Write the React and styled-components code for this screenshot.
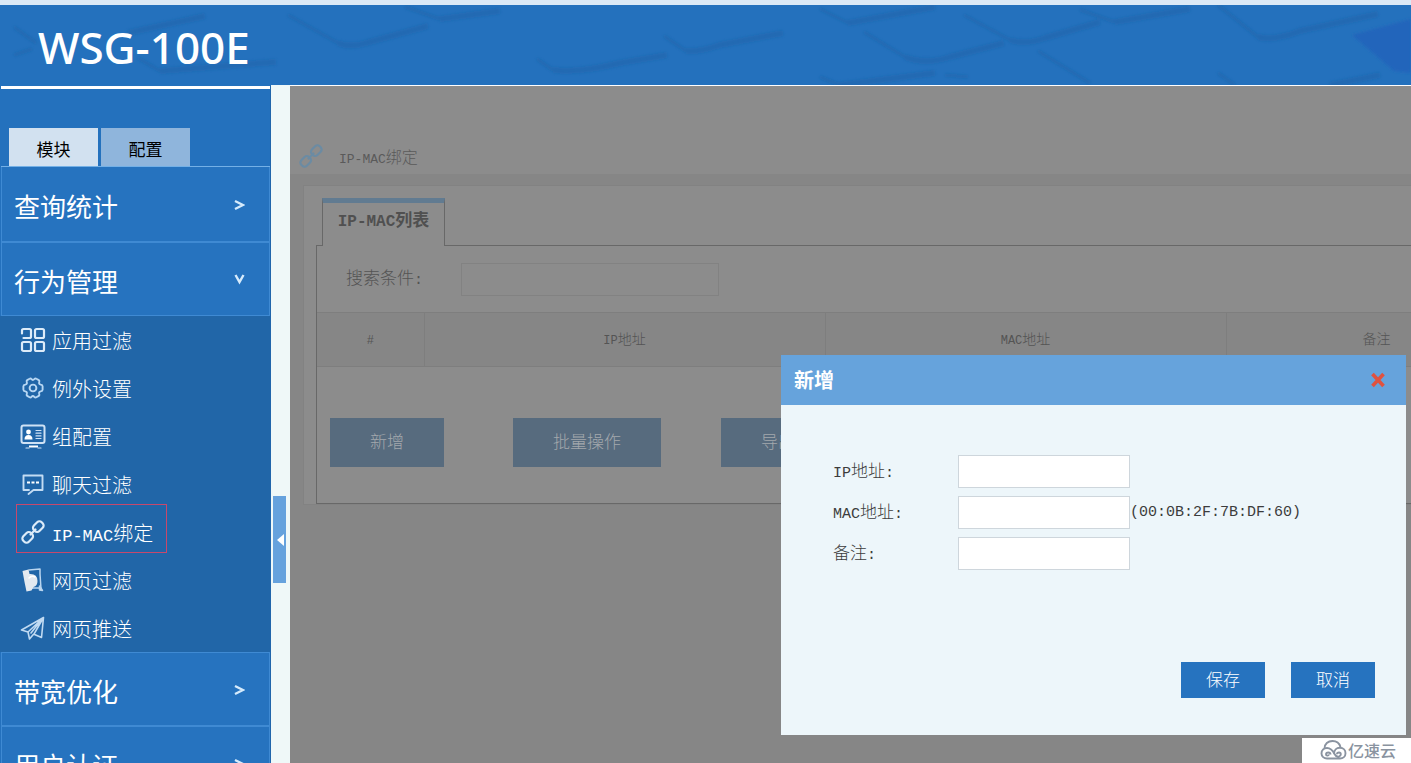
import React from "react";
import styled, { createGlobalStyle, css } from "styled-components";

const CJK = '"Noto Sans CJK SC", sans-serif';

const GlobalStyle = createGlobalStyle`
  *, *::before, *::after { box-sizing: border-box; }
  body { margin: 0; overflow: hidden; font-family: ${CJK}; font-weight: 300; }
  button, input { font-family: inherit; font-weight: inherit; }
  button { border: 0; padding: 0; cursor: pointer; }
  h1, h2, ul { margin: 0; padding: 0; }
`;

/* ---------- text ---------- */

const Latin = styled.span`
  font-family: "Liberation Mono", monospace;
  font-size: ${(p) => p.$size}px;
`;

function Mixed({ text, size }) {
  return text
    .split(/([\x21-\x7e]+)/)
    .filter(Boolean)
    .map((part, i) =>
      /[\x21-\x7e]/.test(part) ? (
        <Latin key={i} $size={size}>
          {part}
        </Latin>
      ) : (
        <React.Fragment key={i}>{part}</React.Fragment>
      )
    );
}

/* ---------- page frame ---------- */

const Page = styled.div`
  display: flex;
  flex-direction: column;
  height: 100vh;
  overflow: hidden;
  background: #eff8f8;
`;

const Header = styled.header`
  position: relative;
  flex: none;
  height: 85px;
  border-top: 5px solid #dbe9f6;
  background: #2471bd;
  overflow: hidden;
`;

const HeaderArt = styled.svg`
  position: absolute;
  inset: 0;
  width: 100%;
  height: 80px;
`;

const Brand = styled.h1`
  position: relative;
  padding-left: 38px;
  color: #fff;
  font-family: "Noto Sans", sans-serif;
  font-size: 44px;
  font-weight: 500;
  line-height: 84px;
`;

const Columns = styled.div`
  display: flex;
  flex: 1;
  min-height: 0;
`;

/* ---------- sidebar ---------- */

const Sidebar = styled.nav`
  flex: none;
  width: 271px;
  border-top: 1px solid #2471bd;
  border-right: 1px solid #2166ab;
  background: #2471bd;
  overflow: hidden;
`;

const SideTabs = styled.div`
  display: flex;
  gap: 3px;
  height: 81px;
  margin-left: 1px;
  padding: 39px 8px 0;
  border-top: 3px solid #fff;
  border-bottom: 1px solid #74b0e6;
`;

const SideTab = styled.button`
  width: 89px;
  height: 38px;
  padding-top: 2px;
  background: ${(p) => (p.$active ? "#d2e1f0" : "#8fb5dc")};
  color: #000;
  font-size: 17px;
  font-weight: 400;
`;

const GroupButton = styled.button`
  display: flex;
  align-items: center;
  justify-content: space-between;
  width: 269px;
  height: ${(p) => (p.$first ? 75 : 74)}px;
  margin-left: 1px;
  padding: 3px 24px 0 12px;
  border: 1px solid #3f8ad3;
  border-top-width: ${(p) => (p.$first ? 0 : 1)}px;
  background: #2673bf;
  color: #fff;
  font-size: 26px;
  font-weight: 400;
`;

const Submenu = styled.ul`
  list-style: none;
  background: #2166a8;
`;

const SubItem = styled.li`
  position: relative;
  height: 48px;
  ${(p) =>
    p.$marked &&
    css`
      &::after {
        content: "";
        position: absolute;
        top: -4px;
        left: 16px;
        width: 151px;
        height: 49px;
        border: 1px solid #c8486c;
        pointer-events: none;
      }
    `}
`;

const SubLink = styled.a`
  display: flex;
  align-items: center;
  gap: 6px;
  height: 48px;
  padding-left: 20px;
  color: #fff;
  font-size: 20px;
  text-decoration: none;
  white-space: nowrap;
`;

const Gutter = styled.div`
  flex: none;
  width: 19px;
  padding: 411px 0 0 2px;
  background: #eff8f8;
`;

const Collapse = styled.button`
  display: flex;
  align-items: center;
  justify-content: flex-end;
  width: 13px;
  height: 87px;
  padding-right: 2px;
  background: #66a2dd;
`;

/* ---------- content ---------- */

const Content = styled.main`
  flex: 1;
  min-width: 0;
  border-top: 1px solid #fff;
  background: #868686;
  overflow: hidden;
`;

const TitleBar = styled.div`
  display: flex;
  align-items: center;
  gap: 15px;
  height: 88px;
  padding: 52px 0 0 8px;
  background: #8c8c8c;
  color: #5a5a5a;
  font-size: 16px;
`;

const Panel = styled.section`
  min-width: 1236px;
  margin: 11px 0 0 13px;
  padding: 12px 12px 0;
  border: 1px solid #828282;
  background: #8c8c8c;
`;

const PanelTab = styled.button`
  position: relative;
  display: block;
  width: 123px;
  height: 48px;
  margin: 0 0 -1px 6px;
  padding-bottom: 12px;
  border: 1px solid #686868;
  border-top: 5px solid #617b91;
  border-bottom: 0;
  background: #8c8c8c;
  color: #505050;
  font-size: 17px;
  font-weight: 700;
`;

const PanelBody = styled.div`
  border: 1px solid #686868;
`;

const SearchRow = styled.div`
  display: flex;
  align-items: center;
  height: 66px;
  padding-left: 29px;
  color: #545454;
  font-size: 17px;
`;

const SearchLabel = styled.label`
  width: 115px;
  padding-bottom: 5px;
`;

const SearchInput = styled.input`
  width: 258px;
  height: 33px;
  border: 1px solid #828282;
  background: #8c8c8c;
`;

const Table = styled.table`
  width: 100%;
  min-width: 1210px;
  table-layout: fixed;
  border-collapse: collapse;
  color: #545454;
  font-size: 14px;
`;

const Th = styled.th`
  width: ${(p) => p.$width}px;
  height: 54px;
  padding: 0 0 3px;
  border: 1px solid #7e7e7e;
  border-left-width: 0;
  background: #868686;
  font-weight: 300;
`;

const Actions = styled.div`
  display: flex;
  gap: 60px;
  padding: 51px 13px 36px;
`;

const ActionButton = styled.button`
  height: 49px;
  padding: 0 40px 4px;
  background: #576b7e;
  color: #a3a8ad;
  font-size: 17px;
  &:first-child { margin-right: 9px; }
`;

/* ---------- dialog ---------- */

const Dialog = styled.section`
  position: fixed;
  right: 5px;
  bottom: 28px;
  width: 625px;
  height: 380px;
  background: #edf6fa;
`;

const DialogHeader = styled.header`
  display: flex;
  align-items: center;
  justify-content: space-between;
  height: 50px;
  padding: 0 20px 0 13px;
  background: #66a3dc;
`;

const DialogTitle = styled.h2`
  color: #fff;
  font-size: 20px;
  font-weight: 700;
  line-height: 50px;
`;

const CloseButton = styled.button`
  display: flex;
  background: none;
`;

const Form = styled.form`
  display: flex;
  flex-direction: column;
  gap: 8px;
  padding: 50px 31px 0 52px;
  color: #3c3c3c;
  font-size: 17px;
`;

const Field = styled.div`
  display: flex;
  align-items: center;
  height: 33px;
`;

const FieldLabel = styled.label`
  width: 125px;
  padding-bottom: 4px;
`;

const FieldInput = styled.input`
  width: 172px;
  height: 33px;
  border: 1px solid #ced6dc;
  background: #fff;
`;

const DialogActions = styled.div`
  display: flex;
  justify-content: flex-end;
  gap: 26px;
  padding-top: 84px;
`;

const DialogButton = styled.button`
  width: 84px;
  height: 36px;
  padding-bottom: 4px;
  background: #2673bf;
  color: #fff;
  font-size: 17px;
`;

const Watermark = styled.div`
  position: fixed;
  right: 0;
  bottom: 0;
  display: flex;
  align-items: center;
  gap: 1px;
  width: 109px;
  height: 25px;
  padding: 0 0 1px 18px;
  background: #fff;
  color: #8a93a0;
  font-size: 16px;
  font-weight: 500;
  white-space: nowrap;
`;

/* ---------- icons ---------- */

const Icon = ({ children, color = "#dcebf9", width = 2 }) => (
  <svg
    width="26"
    height="26"
    viewBox="0 0 26 26"
    fill="none"
    stroke={color}
    strokeWidth={width}
    strokeLinecap="round"
    strokeLinejoin="round"
    aria-hidden="true"
  >
    {children}
  </svg>
);

const GridIcon = () => (
  <Icon width={2.2}>
    <path d="M2 6.500V3.500A1.500 1.500 0 0 1 3.500 2h6A1.500 1.500 0 0 1 11 3.500v6A1.500 1.500 0 0 1 9.500 11H3.500" />
    <rect x="15" y="2" width="9" height="9" rx="1.5" />
    <rect x="2" y="15" width="9" height="9" rx="1.5" />
    <rect x="15" y="15" width="9" height="9" rx="1.5" />
  </Icon>
);

const GearIcon = () => (
  <Icon width={1.9} color="#b8d7f3">
    <path d="M9.600 3.700Q10.700 3 11.500 4.200Q12.800 5.700 14.300 4.200Q15.300 3 16.400 3.700L18.800 5.100Q19.800 5.900 19.200 7.200Q18.600 9.200 20.700 9.600Q22.500 9.900 22.600 11.200V14.800Q22.500 16.100 20.700 16.400Q18.600 16.800 19.200 18.800Q19.800 20.100 18.800 20.900L16.400 22.300Q15.300 23 14.300 21.800Q12.900 20.300 11.500 21.800Q10.700 23 9.600 22.300L7.200 20.900Q6.200 20.100 6.800 18.800Q7.400 16.800 5.300 16.400Q3.500 16.100 3.400 14.800V11.200Q3.500 9.900 5.300 9.600Q7.400 9.200 6.800 7.200Q6.200 5.900 7.200 5.100Z" />
    <circle cx="13" cy="13" r="3.400" />
  </Icon>
);

const MonitorIcon = () => (
  <Icon color="#cfe2f5">
    <rect x="1.500" y="2.500" width="23" height="17.500" rx="2" />
    <g fill="#fff" stroke="none">
      <circle cx="8.500" cy="9" r="2.400" />
      <path d="M4.500 16.500Q4.500 12 8.500 12Q12.500 12 12.500 16.500Z" />
      <path d="M9 22.500h9v2H9z" />
    </g>
    <path strokeWidth="1.200" d="M16 7.500h5M16 10.200h5M16 12.900h5M16 15.500h5M6 25h3M18 25h3" />
  </Icon>
);

const ChatIcon = () => (
  <Icon width={1.9} color="#c3dcf3">
    <path d="M9 19H3.500V4.500h19V19H13.500L8.500 23" />
    <path strokeWidth="2.200" strokeLinecap="butt" stroke="#fff" d="M7 11.500h3M11.500 11.500h3M16 11.500h3" />
  </Icon>
);

const ChainIcon = ({ color }) => (
  <Icon width={2.2} color={color}>
    <rect x="-5.500" y="-3.900" width="11" height="7.800" rx="3.200" transform="translate(18.300 7.700) rotate(-45)" />
    <rect x="-5.500" y="-3.900" width="11" height="7.800" rx="3.200" transform="translate(7.700 18.300) rotate(-45)" />
    <path d="M10.500 15.500L15.500 10.500" />
  </Icon>
);

const PageIcon = () => (
  <Icon width={1.5} color="#b9d5ef">
    <path d="M9 3L20 2v5l1 15-2-1H10" />
    <path d="M19.500 19l3 4.500-3-.5z" fill="#e8eef4" />
    <path stroke="none" fill="#e3e9f0" d="M2.500 4l6-1.500L9.500 7q8-0.500 8 7 0 5-4 6l-2 3.500-5 1L4.500 15z" />
    <path d="M9 11q2.500-3 6-1" stroke="#fff" />
  </Icon>
);

const PlaneIcon = () => (
  <Icon width={1.6} color="#c0daf2">
    <path d="M23.500 2.500L1.500 15l6.500 2zM23.500 2.500L21.500 22.500l-7.500-3.300zM8 17l1.500 7 3.800-4.500M11 18l9.500-12" />
  </Icon>
);

const Chevron = ({ open }) => (
  <svg width="12" height="14" viewBox="0 0 12 14" fill="none" stroke="#d6ebfc" strokeWidth="2.400" aria-hidden="true">
    <path d={open ? "M2.500 1L6.500 8L10.500 1" : "M2 2L10 6L2 10"} />
  </svg>
);

const CloseIcon = () => (
  <svg width="16" height="16" viewBox="0 0 16 16" stroke="#e0523f" strokeWidth="3.600" aria-hidden="true">
    <path d="M2.500 2L13.500 14M13.500 2L2.500 14" />
  </svg>
);

const CloudLogo = () => (
  <svg width="27" height="22" viewBox="0 0 27 22" fill="none" stroke="#8a93a0" strokeWidth="1.900" aria-hidden="true">
    <path d="M4.500 9.500C4.500 5 8 2 12.500 2C17 2 19.500 4.500 20.500 8" />
    <path d="M14 15C14 11 16.500 8.800 19.800 8.800C23.500 8.800 25.500 11.500 25.500 14.200C25.500 17.500 23 19.500 20 19.500H7C4 19.500 1.500 17.500 1.500 14.500C1.500 11 4 9 7 9C11 9 13 12 14.500 15C15.500 17 17 18 19 17.500C21.500 16.800 21.300 13.500 19 13.500C17.800 13.500 17 14.300 17 15.300" />
    <path d="M10.500 15.500C10.500 13 6 12.800 6 15.200C6 17 8.500 17 9 15.500" />
  </svg>
);

const KeyboardArt = () => (
  <HeaderArt viewBox="0 0 1411 80" preserveAspectRatio="xMidYMid slice" aria-hidden="true">
    <defs>
      <filter id="soft" x="-5%" y="-30%" width="110%" height="160%">
        <feGaussianBlur stdDeviation="1.500" />
      </filter>
    </defs>
    <g fill="none" stroke="#1e5c9d" strokeLinejoin="round" filter="url(#soft)">
      <g strokeWidth="3" opacity="0.4">
        <path d="M14 22L36 38M14 50L32 44M138 53L160 66M288 10L338 38M405 2L440 14" />
        <path d="M537 54L553 65M664 31L686 46M820 4L848 18M864 27L905 52M820 72L840 80" />
        <path d="M964 10L1010 35M1080 5L1115 17M1038 46L1090 78M1218 0L1258 32M1218 68L1235 80M945 70L968 72" />
      </g>
      <g strokeWidth="6" opacity="0.32">
        <path d="M128 28L205 11M160 66L276 57M338 38Q350 43 366 38L428 21M440 14L500 6" />
        <path d="M553 65Q580 68 620 58L667 50M686 46Q700 47 720 40L783 28M848 18L935 2" />
        <path d="M905 52Q925 60 950 52L1004 38M840 80L935 68M1010 35Q1025 40 1045 33L1100 17" />
        <path d="M1115 17L1190 4M1258 32Q1275 36 1300 26L1378 9M1330 80L1380 70" />
      </g>
    </g>
    <path d="M1352 30L1411 14V68L1394 66Z" fill="#2065bb" filter="url(#soft)" />
  </HeaderArt>
);

/* ---------- data ---------- */

const submenu = [
  { label: "应用过滤", icon: GridIcon },
  { label: "例外设置", icon: GearIcon },
  { label: "组配置", icon: MonitorIcon },
  { label: "聊天过滤", icon: ChatIcon },
  { label: "IP-MAC绑定", icon: ChainIcon, marked: true },
  { label: "网页过滤", icon: PageIcon },
  { label: "网页推送", icon: PlaneIcon },
];

const groups = [
  { label: "查询统计" },
  { label: "行为管理", items: submenu },
  { label: "带宽优化" },
  { label: "用户认证" },
];

const columns = [
  { label: "#", width: 107 },
  { label: "IP地址", width: 401 },
  { label: "MAC地址", width: 401 },
  { label: "备注", width: 301 },
];

const fields = [
  { id: "ip", label: "IP地址:" },
  { id: "mac", label: "MAC地址:", hint: "(00:0B:2F:7B:DF:60)" },
  { id: "note", label: "备注:" },
];

export default function App() {
  return (
    <Page>
      <GlobalStyle />
      <Header>
        <KeyboardArt />
        <Brand>WSG-100E</Brand>
      </Header>
      <Columns>
        <Sidebar>
          <SideTabs>
            <SideTab $active>模块</SideTab>
            <SideTab>配置</SideTab>
          </SideTabs>
          {groups.map((group, i) => (
            <React.Fragment key={group.label}>
              <GroupButton $first={i === 0} aria-expanded={Boolean(group.items)}>
                {group.label}
                <Chevron open={Boolean(group.items)} />
              </GroupButton>
              {group.items && (
                <Submenu>
                  {group.items.map(({ label, icon: ItemIcon, marked }) => (
                    <SubItem key={label} $marked={marked}>
                      <SubLink href="#">
                        <ItemIcon />
                        <span>
                          <Mixed text={label} size={17} />
                        </span>
                      </SubLink>
                    </SubItem>
                  ))}
                </Submenu>
              )}
            </React.Fragment>
          ))}
        </Sidebar>
        <Gutter>
          <Collapse aria-label="收起">
            <svg width="7" height="12" viewBox="0 0 7 12" fill="#fff" aria-hidden="true">
              <path d="M7 0V12L0 6Z" />
            </svg>
          </Collapse>
        </Gutter>
        <Content>
          <TitleBar>
            <ChainIcon color="#6b8ba3" />
            <span>
              <Mixed text="IP-MAC绑定" size={13} />
            </span>
          </TitleBar>
          <Panel>
            <PanelTab>
              <Mixed text="IP-MAC列表" size={16} />
            </PanelTab>
            <PanelBody>
              <SearchRow>
                <SearchLabel htmlFor="search">
                  <Mixed text="搜索条件:" size={15} />
                </SearchLabel>
                <SearchInput id="search" type="text" />
              </SearchRow>
              <Table>
                <thead>
                  <tr>
                    {columns.map((c) => (
                      <Th key={c.label} $width={c.width} scope="col">
                        <Mixed text={c.label} size={12} />
                      </Th>
                    ))}
                  </tr>
                </thead>
              </Table>
              <Actions>
                <ActionButton>新增</ActionButton>
                <ActionButton>批量操作</ActionButton>
                <ActionButton>导出</ActionButton>
              </Actions>
            </PanelBody>
          </Panel>
        </Content>
      </Columns>
      <Dialog role="dialog" aria-labelledby="dialog-title">
        <DialogHeader>
          <DialogTitle id="dialog-title">新增</DialogTitle>
          <CloseButton aria-label="关闭">
            <CloseIcon />
          </CloseButton>
        </DialogHeader>
        <Form onSubmit={(e) => e.preventDefault()}>
          {fields.map((f) => (
            <Field key={f.id}>
              <FieldLabel htmlFor={f.id}>
                <Mixed text={f.label} size={15} />
              </FieldLabel>
              <FieldInput id={f.id} type="text" />
              {f.hint && <Mixed text={f.hint} size={15} />}
            </Field>
          ))}
          <DialogActions>
            <DialogButton type="submit">保存</DialogButton>
            <DialogButton type="button">取消</DialogButton>
          </DialogActions>
        </Form>
      </Dialog>
      <Watermark>
        <CloudLogo />
        亿速云
      </Watermark>
    </Page>
  );
}
